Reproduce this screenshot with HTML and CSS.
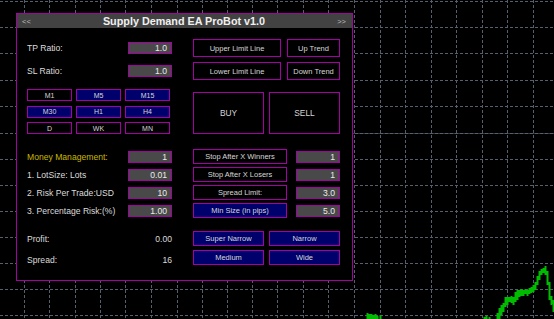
FILE: index.html
```html
<!DOCTYPE html>
<html lang="en">

<head>
    <meta charset="UTF-8" />
    <title>Supply Demand EA ProBot v1.0</title>
    <link rel="stylesheet" href="styles.css">
</head>

<body>
    <div class="chart">
        <!-- chart grid and price bars -->
        <svg class="grid" width="554" height="319" viewBox="0 0 554 319">
            <line class="price-line" x1="352" y1="133.5" x2="554" y2="133.5" />
            <g class="grid-lines">
                <line x1="0" y1="1.5" x2="554" y2="1.5" />
                <line x1="0" y1="27.5" x2="554" y2="27.5" />
                <line x1="0" y1="53.5" x2="554" y2="53.5" />
                <line x1="0" y1="80.5" x2="554" y2="80.5" />
                <line x1="0" y1="106.5" x2="554" y2="106.5" />
                <line x1="0" y1="133.5" x2="554" y2="133.5" />
                <line x1="0" y1="159.5" x2="554" y2="159.5" />
                <line x1="0" y1="185.5" x2="554" y2="185.5" />
                <line x1="0" y1="211.5" x2="554" y2="211.5" />
                <line x1="0" y1="237.5" x2="554" y2="237.5" />
                <line x1="0" y1="263.5" x2="554" y2="263.5" />
                <line x1="0" y1="289.5" x2="554" y2="289.5" />
                <line x1="0" y1="315.5" x2="554" y2="315.5" />
                <line x1="24.5" y1="0" x2="24.5" y2="319" />
                <line x1="49.5" y1="0" x2="49.5" y2="319" />
                <line x1="75.5" y1="0" x2="75.5" y2="319" />
                <line x1="100.5" y1="0" x2="100.5" y2="319" />
                <line x1="125.5" y1="0" x2="125.5" y2="319" />
                <line x1="151.5" y1="0" x2="151.5" y2="319" />
                <line x1="177.5" y1="0" x2="177.5" y2="319" />
                <line x1="202.5" y1="0" x2="202.5" y2="319" />
                <line x1="227.5" y1="0" x2="227.5" y2="319" />
                <line x1="252.5" y1="0" x2="252.5" y2="319" />
                <line x1="277.5" y1="0" x2="277.5" y2="319" />
                <line x1="303.5" y1="0" x2="303.5" y2="319" />
                <line x1="328.5" y1="0" x2="328.5" y2="319" />
                <line x1="354.5" y1="0" x2="354.5" y2="319" />
                <line x1="380.5" y1="0" x2="380.5" y2="319" />
                <line x1="405.5" y1="0" x2="405.5" y2="319" />
                <line x1="431.5" y1="0" x2="431.5" y2="319" />
                <line x1="456.5" y1="0" x2="456.5" y2="319" />
                <line x1="482.5" y1="0" x2="482.5" y2="319" />
                <line x1="507.5" y1="0" x2="507.5" y2="319" />
                <line x1="533.5" y1="0" x2="533.5" y2="319" />
            </g>
            <path class="bars" d="M367.5 313V319 M369.5 314V319 M371.5 314V319 M373.5 315V319 M375.5 314V319 M377.5 316V319 M380.5 315V319
                M484.5 317V319 M486.5 316V319 M489.5 317V319
                M497.5 313V319 M499.5 308V319 M501.5 305V315 M503.5 303V312 M505.5 297V307 M507.5 297V305
                M509.5 297V302 M511.5 296V303 M513.5 297V305 M515.5 292V302 M517.5 290V300 M519.5 290V297
                M521.5 289V296 M523.5 290V296 M525.5 289V294 M527.5 290V296 M529.5 288V294 M531.5 287V293
                M533.5 285V292 M535.5 282V290 M537.5 276V285 M539.5 271V280 M541.5 269V275 M543.5 268V273
                M545.5 266V275 M547.5 271V285 M549.5 282V300 M551.5 296V305 M553.5 300V312" />
        </svg>

        <!-- EA panel -->
        <div class="panel">
            <div class="titlebar">
                <span class="nav">&lt;&lt;</span>
                <span class="title">Supply Demand EA ProBot v1.0</span>
                <span class="nav">&gt;&gt;</span>
            </div>

            <div class="panel-body">

                <div class="block ratios">
                    <div class="left rows">
                        <div class="row"><span class="label">TP Ratio:</span><span class="field">1.0</span></div>
                        <div class="row"><span class="label">SL Ratio:</span><span class="field">1.0</span></div>
                    </div>
                    <div class="right limits">
                        <button class="btn">Upper Limit Line</button>
                        <button class="btn">Up Trend</button>
                        <button class="btn">Lower Limit Line</button>
                        <button class="btn">Down Trend</button>
                    </div>
                </div>

                <div class="block trade">
                    <div class="left timeframes">
                        <button class="btn tf">M1</button>
                        <button class="btn tf blue">M5</button>
                        <button class="btn tf blue">M15</button>
                        <button class="btn tf blue">M30</button>
                        <button class="btn tf blue">H1</button>
                        <button class="btn tf blue">H4</button>
                        <button class="btn tf">D</button>
                        <button class="btn tf">WK</button>
                        <button class="btn tf">MN</button>
                    </div>
                    <div class="right orders">
                        <button class="btn big">BUY</button>
                        <button class="btn big">SELL</button>
                    </div>
                </div>

                <div class="block money">
                    <div class="left rows">
                        <div class="row"><span class="label gold">Money Management:</span><span class="field">1</span></div>
                        <div class="row"><span class="label">1. LotSize: Lots</span><span class="field">0.01</span></div>
                        <div class="row"><span class="label">2. Risk Per Trade:USD</span><span class="field">10</span></div>
                        <div class="row"><span class="label">3. Percentage Risk:(%)</span><span class="field">1.00</span></div>
                    </div>
                    <div class="right stops">
                        <button class="btn">Stop After X Winners</button><span class="field">1</span>
                        <button class="btn">Stop After X Losers</button><span class="field">1</span>
                        <button class="btn">Spread Limit:</button><span class="field">3.0</span>
                        <button class="btn blue">Min Size (in pips)</button><span class="field">5.0</span>
                    </div>
                </div>

                <div class="block stats">
                    <div class="left rows">
                        <div class="row"><span class="label">Profit:</span><span class="value">0.00</span></div>
                        <div class="row"><span class="label">Spread:</span><span class="value">16</span></div>
                    </div>
                    <div class="right zones">
                        <button class="btn blue">Super Narrow</button>
                        <button class="btn blue">Narrow</button>
                        <button class="btn blue">Medium</button>
                        <button class="btn blue">Wide</button>
                    </div>
                </div>

            </div>
        </div>
    </div>
</body>

</html>
```

FILE: styles.css
```css
body {
    margin: 0;
    padding: 0;
    background-color: #000;
    font-family: 'Liberation Sans', Arial, sans-serif;
    color: #dcdcdc;
}

.chart {
    position: relative;
    width: 554px;
    height: 319px;
    overflow: hidden;
}

.grid {
    display: block;
}

.grid-lines line {
    stroke: #56606c;
    stroke-width: 1;
    stroke-dasharray: 3 2;
}

.price-line {
    stroke: #343b45;
    stroke-width: 1;
}

.bars {
    stroke: #00bc00;
    stroke-width: 2;
    fill: none;
}

/* panel floats over the chart */
.panel {
    position: absolute;
    left: 16px;
    top: 13px;
    width: 337px;
    height: 268px;
    box-sizing: border-box;
    border: 1px solid #a400a4;
    background-color: #000;
}

.titlebar {
    display: flex;
    align-items: center;
    justify-content: space-between;
    height: 14px;
    padding: 0 6px 0 5px;
    background-color: #424242;
}

.title {
    font-size: 10.8px;
    font-weight: bold;
    color: #f0f0f0;
}

.nav {
    font-size: 7.5px;
    color: #bdbdbd;
}

.panel-body {
    padding: 11px 0 0 10px;
}

.block {
    display: flex;
    gap: 21px;
}

.left {
    width: 145px;
}

.right {
    width: 147px;
}

.rows {
    display: flex;
    flex-direction: column;
}

.row {
    display: flex;
    align-items: center;
    justify-content: space-between;
}

.label {
    font-size: 8.6px;
    color: #dcdcdc;
}

.gold {
    color: #c8b800;
}

.field {
    box-sizing: border-box;
    width: 44px;
    height: 12px;
    padding-right: 4px;
    border: 1px solid #a400a4;
    background-color: #494949;
    font-size: 8.6px;
    line-height: 10px;
    text-align: right;
    color: #ececec;
}

.value {
    font-size: 8.6px;
    color: #dcdcdc;
}

.btn {
    box-sizing: border-box;
    margin: 0;
    padding: 0;
    border: 1px solid #a400a4;
    background-color: #000;
    color: #d6d6d6;
    font-family: 'Liberation Sans', Arial, sans-serif;
    font-size: 7.5px;
    white-space: nowrap;
}

.btn.blue {
    background-color: #00006c;
}

/* TP / SL and limit lines */
.ratios .rows {
    gap: 5px;
}

.ratios .row {
    height: 18px;
}

.limits {
    display: grid;
    grid-template-columns: 88px 53px;
    grid-auto-rows: 18px;
    gap: 5px 6px;
}

/* timeframes and order buttons */
.trade {
    margin-top: 9px;
}

.timeframes {
    display: grid;
    grid-template-columns: repeat(3, 45px);
    grid-auto-rows: 12px;
    gap: 4.5px 4px;
}

.tf {
    font-size: 7px;
}

.orders {
    display: grid;
    grid-template-columns: 71px 71px;
    gap: 5px;
    margin-top: 3px;
    height: 42px;
}

.big {
    font-size: 8.4px;
}

/* money management */
.money {
    margin-top: 15px;
}

.money .rows {
    gap: 3px;
}

.money .row {
    height: 15px;
}

.stops {
    display: grid;
    grid-template-columns: 94px 44px;
    grid-auto-rows: 15px;
    gap: 3px 9px;
    align-items: center;
}

.stops .btn {
    height: 15px;
}

/* profit / spread and zone sizes */
.stats {
    margin-top: 13px;
}

.stats .rows {
    gap: 6px;
}

.stats .row {
    height: 15px;
}

.zones {
    display: grid;
    grid-template-columns: 71px 71px;
    grid-auto-rows: 15px;
    gap: 4px 5px;
}
```
